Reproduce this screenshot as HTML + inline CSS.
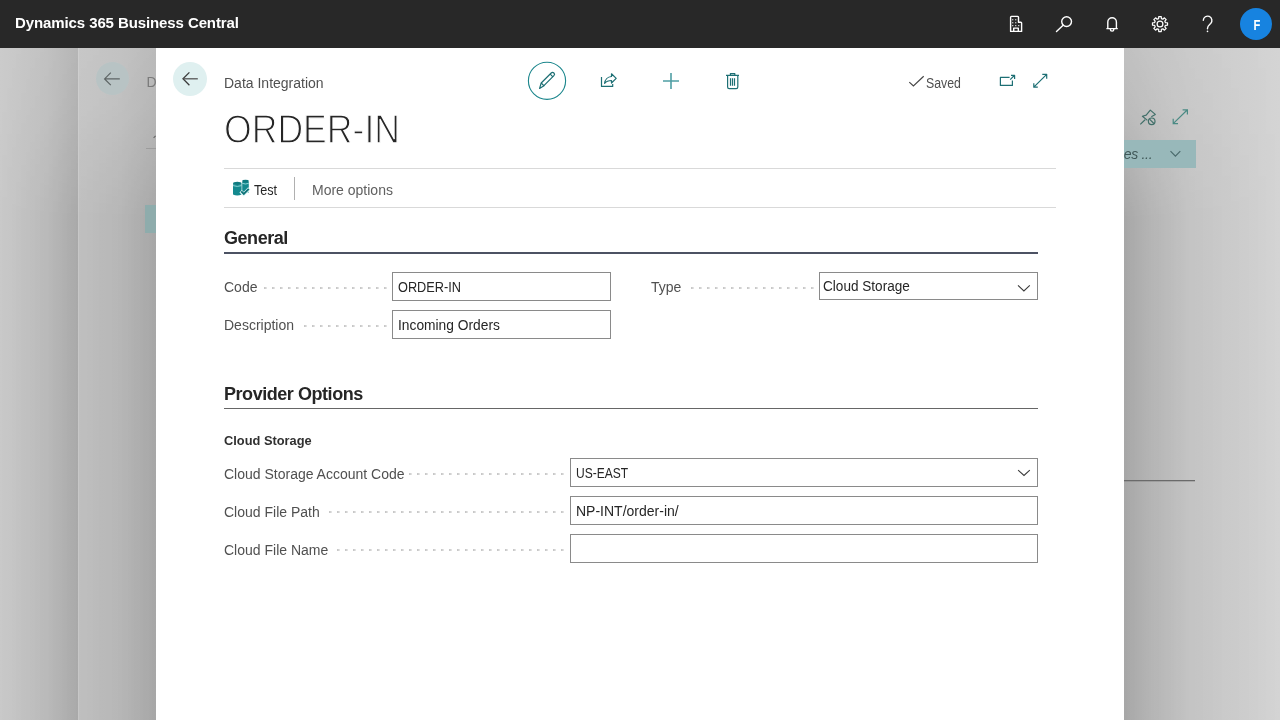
<!DOCTYPE html>
<html><head><meta charset="utf-8">
<style>
*{box-sizing:border-box;margin:0;padding:0}
body{-webkit-font-smoothing:antialiased}
html,body{width:1280px;height:720px;overflow:hidden;background:#cbcbcb;font-family:"Liberation Sans",sans-serif}
.abs{position:absolute}
#bar{left:0;top:0;width:1280px;height:48px;background:#282828}
#brand{left:15px;top:14px;color:#fff;font-weight:bold;font-size:15px;letter-spacing:-0.1px;white-space:nowrap}
#l1{left:0;top:48px;width:78px;height:672px;background:linear-gradient(to right,#cccccc 0%,#c4c4c4 60%,#b8b8b8 100%)}
#l2{left:78px;top:48px;width:78px;height:672px;background:linear-gradient(to right,#cacaca 0%,#c6c6c6 55%,#bfbfbf 100%)}
#r2{left:1124px;top:48px;width:156px;height:672px;background:linear-gradient(to right,#c7c7c7 0px,#cdcdcd 76px,#d4d4d4 156px)}
.sh{position:absolute;top:48px;height:672px;-webkit-mask-image:linear-gradient(to bottom,rgba(0,0,0,0.2) 0,rgba(0,0,0,0.35) 60px,#000 170px,#000 100%);mask-image:linear-gradient(to bottom,rgba(0,0,0,0.2) 0,rgba(0,0,0,0.35) 60px,#000 170px,#000 100%)}
#l1s{left:0;width:78px;background:linear-gradient(to right,rgba(0,0,0,0.01),rgba(0,0,0,0.05) 60%,rgba(0,0,0,0.08))}
#l2s{left:78px;width:78px;background:linear-gradient(to right,rgba(0,0,0,0.05),rgba(0,0,0,0.08) 55%,rgba(0,0,0,0.125))}
#r2s{left:1124px;width:156px;background:linear-gradient(to right,rgba(0,0,0,0.16) 0,rgba(0,0,0,0.1) 26px,rgba(0,0,0,0.04) 66px,rgba(0,0,0,0) 156px)}
#dlg{left:156px;top:48px;width:968px;height:672px;background:#fff}
.lbl{position:absolute;font-size:14px;color:#505050;white-space:nowrap}
.dots{position:absolute;height:4px;background-image:linear-gradient(to right,transparent 3px,#c2c2c2 3px,#d2d2d2 4.5px,#ececec 6px,transparent 6px);background-size:8px 2px;background-position:right 0px top 1px;background-repeat:repeat-x}
.inp{position:absolute;border:1px solid #8a8a8a;background:#fff;font-size:14px;color:#262626;padding-left:5px;white-space:nowrap}
.hdr{position:absolute;font-size:17px;font-weight:bold;color:#262626;white-space:nowrap}
</style></head><body><div id="root" style="position:absolute;left:0;top:0;width:1280px;height:720px;will-change:transform;overflow:hidden">
<div id="bar" class="abs"></div>
<div id="brand" class="abs">Dynamics 365 Business Central</div>

<div id="l1" class="abs"></div>
<div id="l2" class="abs"></div>
<div id="r2" class="abs"></div>
<div id="l1s" class="sh"></div><div id="l2s" class="sh"></div><div id="r2s" class="sh"></div>
<div class="abs" style="left:78px;top:48px;width:1px;height:672px;background:rgba(255,255,255,0.12)"></div>
<div id="dlg" class="abs"></div>

<!-- header -->
<div class="abs" style="left:173px;top:62px;width:34px;height:34px;border-radius:50%;background:#dff0f0"></div>
<div class="lbl" style="left:224px;top:75px;color:#505050">Data Integration</div>
<div class="abs" style="left:224px;top:106px;font-size:40px;line-height:46px;color:#262626;-webkit-text-stroke:1.3px #fff;white-space:nowrap;transform:scaleX(0.89);transform-origin:0 0">ORDER-IN</div>

<div class="abs" style="left:224px;top:168px;width:832px;height:1px;background:#d9d9d9"></div>
<div class="abs" style="left:224px;top:207px;width:832px;height:1px;background:#d9d9d9"></div>
<div class="lbl" style="left:254px;top:182px;color:#262626;transform:scaleX(0.9);transform-origin:0 0">Test</div>
<div class="abs" style="left:294px;top:177px;width:1px;height:23px;background:#b0b0b0"></div>
<div class="lbl" style="left:312px;top:182px;color:#606060">More options</div>

<div class="lbl" style="left:926px;top:75px;color:#505050;transform:scaleX(0.88);transform-origin:0 0">Saved</div>
<div class="hdr" style="left:224px;top:228px;font-size:18px;letter-spacing:-0.45px">General</div>
<div class="abs" style="left:224px;top:252px;width:814px;height:2px;background:#4c5263"></div>

<div class="lbl" style="left:224px;top:279px">Code</div>
<div class="dots" style="left:262px;top:286px;width:127px"></div>
<div class="inp" style="left:392px;top:272px;width:219px;height:29px;line-height:29px"><span style="display:inline-block;transform:scaleX(0.91);transform-origin:0 0">ORDER-IN</span></div>
<div class="lbl" style="left:224px;top:317px">Description</div>
<div class="dots" style="left:300px;top:324px;width:89px"></div>
<div class="inp" style="left:392px;top:310px;width:219px;height:29px;line-height:29px"><span style="display:inline-block;transform:scaleX(0.985);transform-origin:0 0">Incoming Orders</span></div>

<div class="lbl" style="left:651px;top:279px">Type</div>
<div class="dots" style="left:687px;top:286px;width:129px"></div>
<div class="inp" style="left:819px;top:272px;width:219px;height:28px;line-height:26px;padding-left:3px"><span style="display:inline-block;transform:scaleX(0.97);transform-origin:0 0">Cloud Storage</span></div>

<div class="hdr" style="left:224px;top:384px;font-size:18px;letter-spacing:-0.45px">Provider Options</div>
<div class="abs" style="left:224px;top:408px;width:814px;height:1px;background:#666"></div>
<div class="abs" style="left:224px;top:433px;font-size:13.5px;font-weight:bold;color:#303030;white-space:nowrap;transform:scaleX(0.95);transform-origin:0 0">Cloud Storage</div>

<div class="lbl" style="left:224px;top:466px">Cloud Storage Account Code</div>
<div class="dots" style="left:406px;top:472px;width:160px"></div>
<div class="inp" style="left:570px;top:458px;width:468px;height:29px;line-height:29px"><span style="display:inline-block;transform:scaleX(0.86);transform-origin:0 0">US-EAST</span></div>
<div class="lbl" style="left:224px;top:504px">Cloud File Path</div>
<div class="dots" style="left:326px;top:510px;width:240px"></div>
<div class="inp" style="left:570px;top:496px;width:468px;height:29px;line-height:29px"><span style="display:inline-block;transform:scaleX(1.0);transform-origin:0 0">NP-INT/order-in/</span></div>
<div class="lbl" style="left:224px;top:542px">Cloud File Name</div>
<div class="dots" style="left:334px;top:548px;width:232px"></div>
<div class="inp" style="left:570px;top:534px;width:468px;height:29px;line-height:27px"></div>


<!-- top bar icons -->
<svg class="abs" style="left:0;top:0" width="1280" height="48" viewBox="0 0 1280 48">
 <g fill="none" stroke="#fff" stroke-width="1.4" stroke-linejoin="round">
  <path d="M1010.6 31.4V17.2q0-.8.8-.8h6.3q.8 0 .8.8v5.1h2.3q.8 0 .8.8v8.3z"/>
  <path d="M1013.7 31.4v-3.3h4.6v3.3"/>
  <circle cx="1066.6" cy="21.6" r="4.9"/>
  <path d="M1063.1 25.2l-6.6 6.4" stroke-linecap="round"/>
  <path d="M1106.4 28.6h11.4M1107.8 28.6v-6.6a4.3 4.3 0 0 1 8.6 0v6.6M1110.4 28.8v0.6a1.7 1.7 0 0 0 3.4 0v-0.6"/>
  <path d="M1203.3 20.2a4.3 4.3 0 1 1 7.4 3.2c-1.9 1.8-3.2 2.6-3.2 4.8v0.6" stroke-linecap="round"/>
 </g>
 <g fill="#fff">
  <rect x="1012.2" y="19.2" width="1.1" height="1.1"/><rect x="1015.2" y="19.2" width="1.1" height="1.1"/>
  <rect x="1012.2" y="22.2" width="1.1" height="1.1"/><rect x="1015.2" y="22.2" width="1.1" height="1.1"/>
  <rect x="1012.2" y="25.1" width="1.1" height="1.1"/><rect x="1015.2" y="25.1" width="1.1" height="1.1"/><rect x="1018.2" y="25.1" width="1.1" height="1.1"/>
  <circle cx="1207.5" cy="31.4" r="0.8"/>
 </g>
 <g transform="translate(1160 24)" fill="none" stroke="#fff" stroke-width="1.25" stroke-linejoin="round">
  <path d="M-1.35 -5.43 L-1.25 -7.50 L1.25 -7.50 L1.35 -5.43 L2.89 -4.80 L4.42 -6.18 L6.18 -4.42 L4.80 -2.89 L5.43 -1.35 L7.50 -1.25 L7.50 1.25 L5.43 1.35 L4.80 2.89 L6.18 4.42 L4.42 6.18 L2.89 4.80 L1.35 5.43 L1.25 7.50 L-1.25 7.50 L-1.35 5.43 L-2.89 4.80 L-4.42 6.18 L-6.18 4.42 L-4.80 2.89 L-5.43 1.35 L-7.50 1.25 L-7.50 -1.25 L-5.43 -1.35 L-4.80 -2.89 L-6.18 -4.42 L-4.42 -6.18 L-2.89 -4.80Z"/>
  <circle r="2.9"/>
 </g>
 <circle cx="1256" cy="24" r="16" fill="#1783e0"/>
 <text x="1257" y="29.6" fill="#fff" font-family="Liberation Sans" font-weight="bold" font-size="14" text-anchor="middle" transform="translate(1257 0) scale(0.8 1) translate(-1257 0)">F</text>
</svg>

<!-- layer2 left items -->
<div class="abs" style="left:95.5px;top:62px;width:33px;height:33px;border-radius:50%;background:#b8c3c4"></div>
<svg class="abs" style="left:0;top:0" width="160" height="260" viewBox="0 0 160 260">
 <g fill="none" stroke="#5d6464" stroke-width="1.2"><path d="M110.8 72.6l-6.2 6.3 6.2 6.3M104.8 78.9h15"/></g>
 <text x="146.5" y="86.6" fill="#7a7a7a" font-family="Liberation Sans" font-size="14">D</text>
 <rect x="146" y="148" width="10" height="1" fill="#9c9c9c"/>
 <path d="M153.6 137.8l2-2" stroke="#666" stroke-width="1.2"/>
 <rect x="145" y="205" width="11" height="28" fill="#8eacac"/>
</svg>

<!-- layer2 right items -->
<svg class="abs" style="left:1124px;top:48px" width="156" height="672" viewBox="1124 48 156 672">
 <rect x="1124" y="140" width="72" height="28" fill="#98b8ba"/>
 <text x="1117" y="158.6" fill="#3f5757" font-family="Liberation Sans" font-style="italic" font-size="14" letter-spacing="-0.3">ces ...</text>
 <path d="M1170.5 151.2l4.9 4.9 4.9-4.9" fill="none" stroke="#4a6a6c" stroke-width="1.2"/>
 <rect x="1124" y="480" width="71" height="1.3" fill="#6a6a6a"/>
 <g fill="none" stroke="#4f8c88" stroke-width="1.2">
  <path d="M1173.2 123.6l14.2-13.8M1182.6 109.8h4.8v4.8M1173.2 118.8v4.8h4.8" stroke="#4a8a84"/>
  <path d="M1140.3 124.4l4.8-4.7M1147.4 120.4l-5-4.1 3.8-1.2 4.1-5 5 4.3-4 2.3" stroke="#416f69" stroke-linejoin="round"/>
  <circle cx="1151.7" cy="121.3" r="3.3" stroke="#416f69"/><path d="M1149.5 119.1l4.4 4.4" stroke="#416f69"/>
 </g>
</svg>

<!-- dialog header icons -->
<svg class="abs" style="left:156px;top:48px" width="968" height="170" viewBox="156 48 968 170">
 <g fill="none" stroke="#3c3c3c" stroke-width="1.3"><path d="M189.4 72.4l-6.4 6.4 6.4 6.4"/><path d="M183.2 78.8h14.6" stroke="#555"/></g>
 <circle cx="547" cy="80.8" r="18.6" fill="none" stroke="#1b868c" stroke-width="1.1"/>
 <g fill="none" stroke="#1d6f74" stroke-width="1.2" stroke-linejoin="round">
  <path d="M539.6 88.4l1.6-5.4 10-10a1.9 1.9 0 0 1 2.7 2.7l-10 10z"/><path d="M541.2 83l3.1 3.1M550.2 74.2l2.7 2.7"/>
  <path d="M601.5 77v9.4h11.2v-2.4"/>
  <path d="M611.5 73.8L616.2 78.4L611.5 83V80.5C608.6 80.5 606.2 81.4 604.6 83.4C605 79.6 607.8 76.7 611.5 76.5Z"/>
  <path d="M726 75.4h13M730.4 75.4v-1.8h4.4v1.8M727.6 75.6v11.4q0 1.6 1.6 1.6h7q1.6 0 1.6-1.6v-11.4M730.5 78.3v7.4M732.5 78.3v7.4M734.5 78.3v7.4"/>
  <path d="M1009.6 77.4h-9.2v8h12v-5"/><path d="M1010.2 79.6l4.4-4.3M1011 75.3h3.6v3.6"/>
  <path d="M1033.8 87.2l12.9-12.9M1042.3 74.3h4.4v4.5M1033.8 83.2v4h4"/>
 </g>
 <path d="M671 73v16M663 81h16" fill="none" stroke="#4f9ea4" stroke-width="1.6"/>
 <path d="M909.3 82.1l4.1 3.9 10.3-9.7" fill="none" stroke="#474747" stroke-width="1.2"/>
 <g>
  <path d="M233 184.2v10.2q4.2 2.2 8.6 0v-10.2z" fill="#14898e"/>
  <ellipse cx="237.3" cy="183.3" rx="4.3" ry="1.6" fill="#0f7b80"/>
  <path d="M233 185.6q4.3 1.6 8.6 0" fill="none" stroke="#a8e4e4" stroke-width="0.8"/>
  <path d="M242.2 182v10.6q3.3 1.6 6.6 0v-10.6z" fill="#14898e"/>
  <ellipse cx="245.5" cy="181.2" rx="3.3" ry="1.4" fill="#0f7b80"/>
  <path d="M242.2 183.3q3.3 1.4 6.6 0" fill="none" stroke="#a8e4e4" stroke-width="0.8"/>
  <path d="M240.6 191.2l3.2 3.1 5.6-5.8" fill="none" stroke="#e6fafa" stroke-width="3.4"/>
  <path d="M241.2 191.4l2.6 2.6 5-5.2" fill="none" stroke="#0e7378" stroke-width="1.9"/>
 </g>
</svg>

<!-- select chevrons -->
<svg class="abs" style="left:0;top:0" width="1280" height="720" viewBox="0 0 1280 720" style="pointer-events:none">
 <g fill="none" stroke="#3a3a3a" stroke-width="1.1">
  <path d="M1018 285.4l5.9 5.5 5.9-5.5"/>
  <path d="M1018.1 470.2l5.9 5.3 5.8-5.3"/>
 </g>
</svg>
</div></body></html>
